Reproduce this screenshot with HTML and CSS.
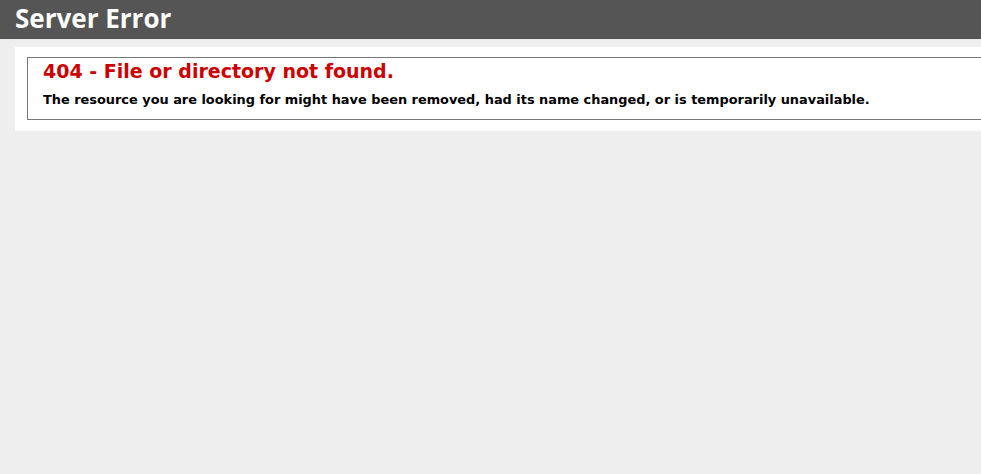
FILE: index.html
```html
<!DOCTYPE html>
<html lang="en">
<head>
    <meta charset="UTF-8">
    <title>404 - File or directory not found.</title>
    <link rel="stylesheet" href="styles.css">
</head>
<body>
    <div id="header"><h1>Server Error</h1></div>
    <div id="content">
        <div class="content-container">
            <fieldset>
                <h2>404 - File or directory not found.</h2>
                <h3>The resource you are looking for might have been removed, had its name changed, or is temporarily unavailable.</h3>
            </fieldset>
        </div>
    </div>
</body>
</html>
```

FILE: styles.css
```css
html {
    overflow: hidden;
}
body {
    margin: 0;
    font-size: 13px;
    font-family: "DejaVu Sans", Verdana, sans-serif;
    background: #eeeeee;
}
#header {
    height: 39px;
    padding: 0 15px;
    box-sizing: border-box;
    font-family: "Open Sans", sans-serif;
    color: #fff;
    background-color: #555555;
}
h1 {
    font-size: 26px;
    line-height: 36px;
    margin: 0;
    color: #fff;
}
#content {
    margin: 0 0 0 15px;
}
.content-container {
    background: #fff;
    width: 1100px;
    margin-top: 8px;
    padding: 10px 12px 11px;
}
fieldset {
    margin: 0;
    padding: 2px 15px 10px 15px;
    border: 1px solid #777;
    border-right: none;
    height: 63px;
    box-sizing: border-box;
}
h2 {
    font-size: 19px;
    line-height: 22px;
    margin: 0;
    color: #cc0000;
}
h3 {
    font-size: 12.9px;
    line-height: 15px;
    margin: 10px 0 0 0;
    color: #000;
}
```
